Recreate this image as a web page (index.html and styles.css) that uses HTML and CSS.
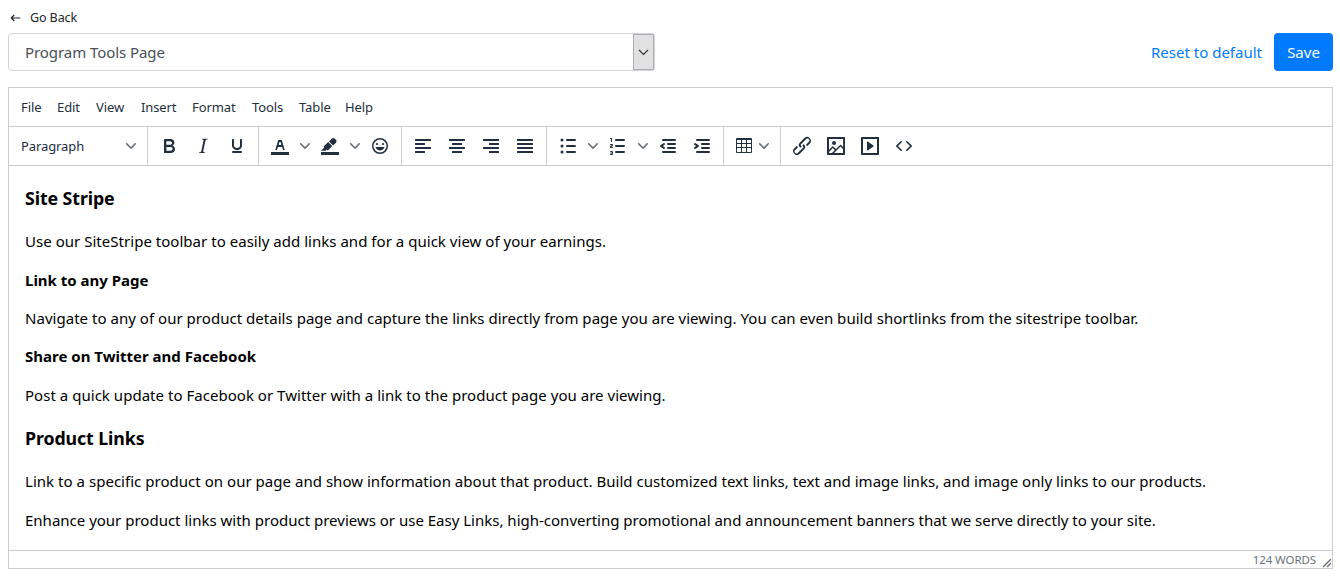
FILE: index.html
```html
<!DOCTYPE html>
<html lang="en">
<head>
<meta charset="utf-8">
<title>Program Tools Page</title>
<link rel="stylesheet" href="styles.css">
</head>
<body>
<svg class="defs" width="0" height="0"><symbol id="chev" viewBox="0 0 10 10"><path d="M8.7 2.2c.3-.3.8-.3 1 0 .4.4.4.9 0 1.2L5.7 7.8c-.3.3-.9.3-1.2 0L.2 3.4a.8.8 0 0 1 0-1.2c.3-.3.8-.3 1.1 0L5 6l3.7-3.8Z"/></symbol></svg>
<a class="back"><svg width="12" height="10" viewBox="0 0 12 10"><path d="M4.3 2 1.3 5l3 3M1.500 5h8.700" fill="none" stroke="#212529" stroke-width="1.2"/></svg><span>Go Back</span></a>
<header class="top">
  <div class="select"><span class="select-text">Program Tools Page</span><span class="select-arrow"><svg width="11" height="7" viewBox="0 0 11 7"><path d="M1 1l4.5 4.5L10 1" fill="none" stroke="#333" stroke-width="1.2"/></svg></span></div>
  <div class="actions"><a class="reset"><span>Reset to default</span></a><button class="save"><span>Save</span></button></div>
</header>
<main class="editor">
  <nav class="menu"><span>File</span><span>Edit</span><span>View</span><span>Insert</span><span>Format</span><span>Tools</span><span>Table</span><span>Help</span></nav>
  <div class="toolbar">
    <div class="group format"><span class="para">Paragraph</span><svg class="chev"><use href="#chev"/></svg></div>
    <div class="group">
      <i class="btn"><svg viewBox="0 0 24 24"><path fill-rule="evenodd" d="M7.8 19c-.3 0-.5 0-.6-.2l-.2-.5V5.7c0-.2 0-.4.2-.5l.6-.2h5c1.5 0 2.7.3 3.5 1 .7.6 1.1 1.4 1.1 2.5a3 3 0 0 1-.6 1.9c-.4.6-1 1-1.6 1.2.4.1.9.3 1.3.6s.8.7 1 1.2c.4.4.5 1 .5 1.6 0 1.3-.4 2.3-1.3 3-.8.7-2.1 1-3.8 1H7.8Zm5-8.3c.6 0 1.2-.1 1.6-.5.4-.3.6-.7.6-1.3 0-1.1-.8-1.7-2.3-1.7H9.3v3.5h3.4Zm.5 6c.7 0 1.3-.1 1.7-.4.4-.4.6-.9.6-1.5s-.2-1-.7-1.4c-.4-.3-1-.4-2-.4H9.4v3.8h4Z"/></svg></i>
      <i class="btn"><svg viewBox="0 0 24 24"><path d="m16.7 4.7-.1.9h-.3c-.6 0-1 0-1.4.3-.3.3-.4.6-.5 1.1l-2.1 9.8v.6c0 .5.4.8 1.4.8h.2l-.2.8H8l.2-.8h.2c1.1 0 1.8-.5 2-1.5l2-9.8.1-.5c0-.6-.4-.8-1.4-.8h-.3l.2-.9h5.8Z"/></svg></i>
      <i class="btn"><svg viewBox="0 0 24 24"><path d="M16 5c.6 0 1 .4 1 1v5.5a4 4 0 0 1-.4 1.8l-1 1.4a5.3 5.3 0 0 1-5.5 1 5 5 0 0 1-1.6-1c-.5-.4-.8-.9-1.1-1.4a4 4 0 0 1-.4-1.8V6c0-.6.4-1 1-1s1 .4 1 1v5.5c0 .3 0 .6.2 1l.6.7a3.3 3.3 0 0 0 2.2.8 3.4 3.4 0 0 0 2.2-.8c.3-.2.4-.5.6-.8l.2-.9V6c0-.6.4-1 1-1ZM8 17h8c.6 0 1 .4 1 1s-.4 1-1 1H8a1 1 0 0 1 0-2Z"/></svg></i>
    </div>
    <div class="group">
      <i class="btn"><svg viewBox="0 0 24 24"><path d="M3 18h18v3H3z"/><path fill-rule="evenodd" d="M8.7 16h-.8a.5.5 0 0 1-.5-.6l2.7-9c.1-.3.3-.4.5-.4h2.8c.2 0 .4.1.5.4l2.7 9a.5.5 0 0 1-.5.6h-.8a.5.5 0 0 1-.4-.4l-.7-2.2c0-.3-.3-.4-.5-.4h-3.4c-.2 0-.4.1-.5.4l-.7 2.2c0 .3-.2.4-.4.4Zm2.6-7.6-.6 2a.5.5 0 0 0 .5.6h1.6a.5.5 0 0 0 .5-.6l-.6-2c0-.3-.3-.4-.5-.4h-.4c-.2 0-.4.1-.5.4Z"/></svg></i><i class="drop"><svg class="chev"><use href="#chev"/></svg></i>
      <i class="btn"><svg viewBox="0 0 24 24"><path d="M3 18h18v3H3z"/><path d="M7.7 16.7H3l3.3-3.3-.7-.8L10.2 8l4 4.1-4 4.2c-.2.2-.6.2-.8 0l-.6-.7-1.1 1.1zm5-7.5L11 7.4l3-2.9a2 2 0 0 1 2.6 0L18 6c.7.7.7 2 0 2.7l-2.9 2.9-1.8-1.8-.5-.6"/></svg></i><i class="drop"><svg class="chev"><use href="#chev"/></svg></i>
      <i class="btn"><svg viewBox="0 0 24 24"><path d="M9 11c.6 0 1-.4 1-1s-.4-1-1-1a1 1 0 0 0-1 1c0 .6.4 1 1 1Zm6 0c.6 0 1-.4 1-1s-.4-1-1-1a1 1 0 0 0-1 1c0 .6.4 1 1 1Zm-3 5.500c2.100 0 4-1.500 4.400-3.500H7.600c.5 2 2.300 3.500 4.400 3.500ZM12 4a8 8 0 1 0 0 16 8 8 0 0 0 0-16Zm0 14.500a6.500 6.500 0 1 1 0-13 6.500 6.500 0 0 1 0 13Z"/></svg></i>
    </div>
    <div class="group">
      <i class="btn"><svg viewBox="0 0 24 24"><path d="M4.500 5h15a.5.5 0 0 1 .5.5v1a.5.5 0 0 1-.5.5h-15a.5.5 0 0 1-.5-.5v-1a.5.5 0 0 1 .5-.5zm0 4h9a.5.5 0 0 1 .5.5v1a.5.5 0 0 1-.5.5h-9a.5.5 0 0 1-.5-.5v-1a.5.5 0 0 1 .5-.5zm0 8h9a.5.5 0 0 1 .5.5v1a.5.5 0 0 1-.5.5h-9a.5.5 0 0 1-.5-.5v-1a.5.5 0 0 1 .5-.5zm0-4h15a.5.5 0 0 1 .5.5v1a.5.5 0 0 1-.5.5h-15a.5.5 0 0 1-.5-.5v-1a.5.5 0 0 1 .5-.5z"/></svg></i>
      <i class="btn"><svg viewBox="0 0 24 24"><path d="M4.500 5h15a.5.5 0 0 1 .5.5v1a.5.5 0 0 1-.5.5h-15a.5.5 0 0 1-.5-.5v-1a.5.5 0 0 1 .5-.5zm3 4h9a.5.5 0 0 1 .5.5v1a.5.5 0 0 1-.5.5h-9a.5.5 0 0 1-.5-.5v-1a.5.5 0 0 1 .5-.5zm0 8h9a.5.5 0 0 1 .5.5v1a.5.5 0 0 1-.5.5h-9a.5.5 0 0 1-.5-.5v-1a.5.5 0 0 1 .5-.5zm-3-4h15a.5.5 0 0 1 .5.5v1a.5.5 0 0 1-.5.5h-15a.5.5 0 0 1-.5-.5v-1a.5.5 0 0 1 .5-.5z"/></svg></i>
      <i class="btn"><svg viewBox="0 0 24 24"><path d="M4.500 5h15a.5.5 0 0 1 .5.5v1a.5.5 0 0 1-.5.5h-15a.5.5 0 0 1-.5-.5v-1a.5.5 0 0 1 .5-.5zm6 4h9a.5.5 0 0 1 .5.5v1a.5.5 0 0 1-.5.5h-9a.5.5 0 0 1-.5-.5v-1a.5.5 0 0 1 .5-.5zm0 8h9a.5.5 0 0 1 .5.5v1a.5.5 0 0 1-.5.5h-9a.5.5 0 0 1-.5-.5v-1a.5.5 0 0 1 .5-.5zm-6-4h15a.5.5 0 0 1 .5.5v1a.5.5 0 0 1-.5.5h-15a.5.5 0 0 1-.5-.5v-1a.5.5 0 0 1 .5-.5z"/></svg></i>
      <i class="btn"><svg viewBox="0 0 24 24"><path d="M4.500 5h15a.5.5 0 0 1 .5.5v1a.5.5 0 0 1-.5.5h-15a.5.5 0 0 1-.5-.5v-1a.5.5 0 0 1 .5-.5zm0 4h15a.5.5 0 0 1 .5.5v1a.5.5 0 0 1-.5.5h-15a.5.5 0 0 1-.5-.5v-1a.5.5 0 0 1 .5-.5zm0 4h15a.5.5 0 0 1 .5.5v1a.5.5 0 0 1-.5.5h-15a.5.5 0 0 1-.5-.5v-1a.5.5 0 0 1 .5-.5zm0 4h15a.5.5 0 0 1 .5.5v1a.5.5 0 0 1-.5.5h-15a.5.5 0 0 1-.5-.5v-1a.5.5 0 0 1 .5-.5z"/></svg></i>
    </div>
    <div class="group">
      <i class="btn"><svg viewBox="0 0 24 24"><path d="M11 5h8a1 1 0 0 1 0 2h-8a1 1 0 0 1 0-2zm0 6h8a1 1 0 0 1 0 2h-8a1 1 0 0 1 0-2zm0 6h8a1 1 0 0 1 0 2h-8a1 1 0 0 1 0-2z"/><circle cx="6" cy="6" r="1.5"/><circle cx="6" cy="12" r="1.5"/><circle cx="6" cy="18" r="1.5"/></svg></i><i class="drop"><svg class="chev"><use href="#chev"/></svg></i>
      <i class="btn"><svg viewBox="0 0 24 24"><path d="M10 17h8a1 1 0 0 1 0 2h-8a1 1 0 0 1 0-2zm0-6h8a1 1 0 0 1 0 2h-8a1 1 0 0 1 0-2zm0-6h8a1 1 0 0 1 0 2h-8a1 1 0 0 1 0-2zM6 4v3.500a.5.5 0 0 1-1 0V5h-.5a.5.5 0 0 1 0-1H6zm-1 8.800.2.200h1.300a.5.5 0 0 1 0 1H4.500a.5.5 0 0 1-.5-.5v-.9a1 1 0 0 1 .6-.9l1.400-.6v-.1H4.500a.5.5 0 0 1 0-1H6a1 1 0 0 1 1 1v.4a1 1 0 0 1-.6.900L5 12.700zM7 17v3a1 1 0 0 1-1 1H4.500a.5.5 0 0 1 0-1h1.300a.3.3 0 0 0 0-.6H4.500a.5.5 0 0 1 0-.9h1.300a.3.3 0 0 0 0-.6H4.500a.5.5 0 0 1 0-.9H6a1 1 0 0 1 1 1z"/></svg></i><i class="drop"><svg class="chev"><use href="#chev"/></svg></i>
      <i class="btn"><svg viewBox="0 0 24 24"><path d="M7 5h12a1 1 0 0 1 0 2H7a1 1 0 0 1 0-2zm5 4h7a1 1 0 0 1 0 2h-7a1 1 0 0 1 0-2zm0 4h7a1 1 0 0 1 0 2h-7a1 1 0 0 1 0-2zm-5 4h12a1 1 0 0 1 0 2H7a1 1 0 0 1 0-2zm1.600-3.800a1 1 0 0 1-1.200 1.600l-3-2a1 1 0 0 1 0-1.600l3-2a1 1 0 0 1 1.200 1.600L6.800 12l1.800 1.200z"/></svg></i>
      <i class="btn"><svg viewBox="0 0 24 24"><path d="M7 5h12a1 1 0 0 1 0 2H7a1 1 0 1 1 0-2zm5 4h7a1 1 0 0 1 0 2h-7a1 1 0 0 1 0-2zm0 4h7a1 1 0 0 1 0 2h-7a1 1 0 0 1 0-2zm-5 4h12a1 1 0 0 1 0 2H7a1 1 0 0 1 0-2zm-2.600-3.800L6.200 12l-1.800-1.200a1 1 0 0 1 1.200-1.600l3 2a1 1 0 0 1 0 1.600l-3 2a1 1 0 1 1-1.200-1.600z"/></svg></i>
    </div>
    <div class="group table-group">
      <i class="btn table"><svg viewBox="0 0 24 24"><path fill-rule="evenodd" d="M19 4a1 1 0 0 1 1 1v13a1 1 0 0 1-1 1H5a1 1 0 0 1-1-1V5a1 1 0 0 1 1-1h14zM5 14v4h4v-4H5zm5 0v4h4v-4h-4zm5 0v4h4v-4h-4zM5 10v3h4v-3H5zm5 0v3h4v-3h-4zm5 0v3h4v-3h-4zM5 6v3h4V6H5zm5 0v3h4V6h-4zm5 0v3h4V6h-4z"/></svg></i><svg class="chev"><use href="#chev"/></svg>
    </div>
    <div class="group last">
      <i class="btn"><svg viewBox="0 0 24 24"><path d="M6.200 12.300a1 1 0 0 1 1.400 1.400l-2 2a2 2 0 1 0 2.600 2.800l4.800-4.800a1 1 0 0 0 0-1.400 1 1 0 1 1 1.400-1.300 2.900 2.900 0 0 1 0 4L9.600 20a3.900 3.900 0 0 1-5.500-5.500l2-2Zm11.600-.6a1 1 0 0 1-1.400-1.400l2-2a2 2 0 1 0-2.600-2.800L11 10.300a1 1 0 0 0 0 1.400A1 1 0 1 1 9.600 13a2.900 2.900 0 0 1 0-4L14.400 4a3.900 3.900 0 0 1 5.500 5.500l-2 2Z"/></svg></i>
      <i class="btn"><svg viewBox="0 0 24 24"><path d="m5 15.700 3.300-3.200c.3-.3.700-.3 1 0L12 15l4.100-4c.3-.4.800-.4 1 0l2 1.900V5H5v10.700ZM5 18V19h3l2.800-2.900-2-2L5 17.900Zm14-3-2.500-2.400-6.400 6.500H19v-4ZM4 3h16c.6 0 1 .4 1 1v16c0 .6-.4 1-1 1H4a1 1 0 0 1-1-1V4c0-.6.4-1 1-1Zm6 8a2 2 0 1 0 0-4 2 2 0 0 0 0 4Z" fill-rule="evenodd"/></svg></i>
      <i class="btn"><svg viewBox="0 0 24 24"><path fill-rule="evenodd" d="M4 3h16c.6 0 1 .4 1 1v16c0 .6-.4 1-1 1H4a1 1 0 0 1-1-1V4c0-.6.4-1 1-1Zm1 2v14h14V5H5Zm4.800 2.600 5.600 4a.5.5 0 0 1 0 .8l-5.600 4A.5.5 0 0 1 9 16V8a.5.5 0 0 1 .8-.4Z"/></svg></i>
      <i class="btn"><svg viewBox="0 0 24 24"><path d="M9.800 15.700c.3.300.3.800 0 1-.3.400-.9.400-1.200 0l-4.400-4.100a.8.8 0 0 1 0-1.200l4.400-4.200c.3-.3.900-.3 1.200 0 .3.300.3.800 0 1.100L6 12l3.800 3.700ZM14.200 15.700c-.3.300-.3.800 0 1 .4.400.9.400 1.200 0l4.400-4.100c.3-.3.300-.9 0-1.200l-4.400-4.200a.8.8 0 0 0-1.200 0c-.3.300-.3.800 0 1.100L18 12l-3.800 3.700Z"/></svg></i>
    </div>
  </div>
  <article class="content">
    <h3><span>Site Stripe</span></h3>
    <p><span>Use our SiteStripe toolbar to easily add links and for a quick view of your earnings.</span></p>
    <h4><span>Link to any Page</span></h4>
    <p><span>Navigate to any of our product details page and capture the links directly from page you are viewing. You can even build shortlinks from the sitestripe toolbar.</span></p>
    <h4><span>Share on Twitter and Facebook</span></h4>
    <p><span>Post a quick update to Facebook or Twitter with a link to the product page you are viewing.</span></p>
    <h3><span>Product Links</span></h3>
    <p><span>Link to a specific product on our page and show information about that product. Build customized text links, text and image links, and image only links to our products.</span></p>
    <p class="closing"><span>Enhance your product links with product previews or use Easy Links, high-converting promotional and announcement banners that we serve directly to your site.</span></p>
  </article>
  <footer class="status"><span class="words">124 WORDS</span><svg width="10" height="10" viewBox="0 0 10 10"><path fill-rule="evenodd" fill="#6b727c" d="M8.100 1.100A.5.5 0 1 1 9 2l-7 7A.5.5 0 1 1 1 8l7-7ZM8.100 5.100A.5.5 0 1 1 9 6l-3 3A.5.5 0 1 1 5 8l3-3Z"/></svg></footer>
</main>
</body>
</html>
```
FILE: styles.css
```css
* { box-sizing: border-box; }
body { margin: 0; padding: 0 7px 0 8px; height: 577px; overflow: hidden; background: #fff; font-family: "Noto Sans", "Open Sans", sans-serif; font-size: 15px; color: #212529; }
svg { display: block; flex: none; }
.defs { position: absolute; }
.back { display: flex; align-items: center; gap: 8px; height: 33px; padding: 2px 0 0 2px; font-size: 12.500px; letter-spacing: -0.1px; }
.top { display: flex; justify-content: space-between; height: 38px; }
.select { display: flex; justify-content: space-between; align-items: center; width: 647px; border: 1px solid #ced4da; border-radius: 4px; color: #495057; padding-left: 16px; letter-spacing: -0.07px; }
.select-arrow { width: 21px; height: 36px; display: flex; align-items: center; justify-content: center; background: #e1e1e1; border: 1px solid #adadad; }
.actions { display: flex; align-items: center; gap: 12px; }
.reset { color: #007bff; }
.save { width: 59px; height: 38px; padding: 0; border: 0; border-radius: 4px; background: #007bff; color: #fff; font: inherit; }
.editor { display: flex; flex-direction: column; height: 482px; margin-top: 16px; border: 1px solid #ccc; }
.menu { display: grid; grid-template-columns: 36px 39px 45px 51px 60px 47px 46px 40px; align-items: center; height: 38px; padding-left: 12px; font-size: 13px; letter-spacing: -0.1px; color: #222f3e; }
.toolbar { display: flex; height: 40px; border-top: 1px solid #ccc; border-bottom: 1px solid #ccc; }
.group { display: flex; align-items: center; padding: 0 4px; border-right: 1px solid #ccc; }
.last { border-right: 0; }
.format { width: 139px; justify-content: space-between; padding: 0 11px 0 12px; font-size: 13px; letter-spacing: -0.1px; color: #222f3e; }
.btn { display: flex; justify-content: center; width: 34px; }
.btn svg { width: 24px; height: 24px; fill: #222f3e; }
.table-group { padding-right: 11px; }
.table { width: 31px; padding-left: 1px; }
.drop { display: flex; justify-content: center; width: 16px; }
.chev { width: 10px; height: 10px; fill: #6b737d; }
.content { flex: 1; padding: 0 16px; color: #000; overflow: hidden; }
.content p, .content h4 { margin: 16px 0; line-height: 22.400px; font-size: 15px; white-space: nowrap; }
.content p { letter-spacing: 0.03px; }
.content .closing { margin-top: 15.500px; letter-spacing: 0; }
.content h3 { margin: 19px 0 18.900px; line-height: 26.200px; font-size: 17.800px; letter-spacing: -0.1px; }
.status { display: flex; align-items: center; justify-content: flex-end; gap: 6px; height: 18px; border-top: 1px solid #ccc; font-size: 11.500px; letter-spacing: -0.1px; color: #6b727c; }
.status svg { align-self: flex-end; }
```
